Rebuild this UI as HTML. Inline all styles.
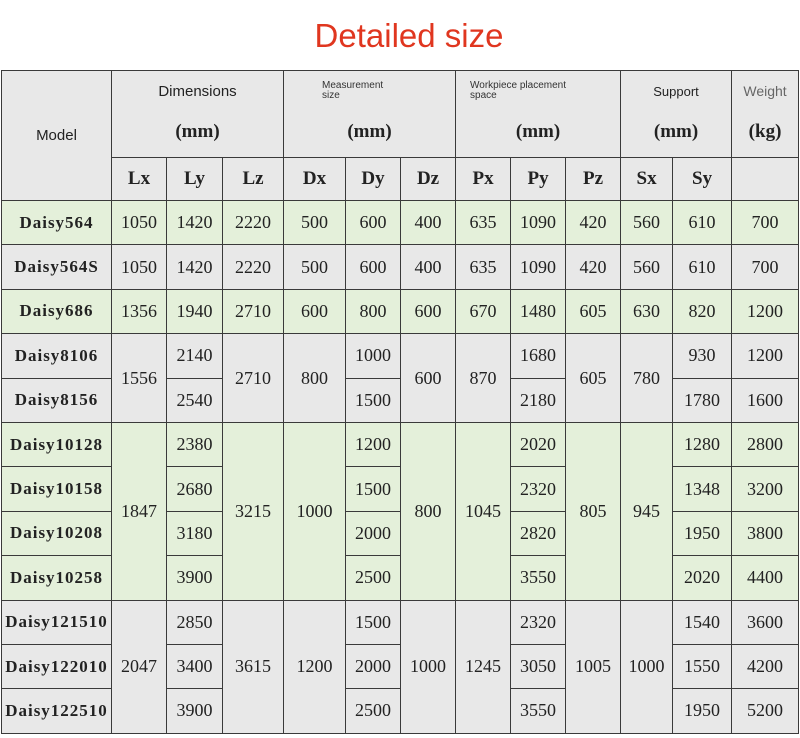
<!DOCTYPE html>
<html><head><meta charset="utf-8"><style>
*{margin:0;padding:0;box-sizing:border-box}
body{width:800px;height:738px;background:#fff;position:relative;overflow:hidden;font-family:"Liberation Serif",serif}
h1{position:absolute;top:17px;left:0;width:818px;text-align:center;font:33px "Liberation Sans",sans-serif;color:#e0361f}
table{position:absolute;left:1px;top:70px;border-collapse:collapse;table-layout:fixed;width:797px}
td{border:1.5px solid #3a3a3a;text-align:center;vertical-align:middle;font-size:18px;color:#222;background:#e8e8e8;padding:0;overflow:hidden;white-space:nowrap}
tr.h1 td{height:87px;position:relative}
tr.h2 td{height:43px;font-weight:bold;font-size:19px}
tr.d td{height:44.4px}
.g td{background:#e4f0da}
td.m{font-weight:bold;font-size:17px;letter-spacing:1px}
.lab{position:absolute;left:0;right:0;top:12px;font:15px "Liberation Sans",sans-serif;color:#222}
.sm{position:absolute;left:14px;top:10px;font:10px/10px "Liberation Sans",sans-serif;color:#333;text-align:left}
.mm{position:absolute;left:0;right:0;top:50px;font-weight:bold;font-size:19px}
</style></head><body>
<h1>Detailed size</h1>
<table>
<colgroup><col style="width:110px"><col style="width:55px"><col style="width:56px"><col style="width:61px"><col style="width:62px"><col style="width:55px"><col style="width:55px"><col style="width:55px"><col style="width:55px"><col style="width:55px"><col style="width:52px"><col style="width:59px"><col style="width:67px"></colgroup>
<tr class="h1"><td rowspan="2" style="font:15px 'Liberation Sans',sans-serif">Model</td>
<td colspan="3"><div class="lab">Dimensions</div><div class="mm">(mm)</div></td>
<td colspan="3"><div class="sm" style="left:38px">Measurement<br>size</div><div class="mm">(mm)</div></td>
<td colspan="3"><div class="sm">Workpiece placement<br>space</div><div class="mm">(mm)</div></td>
<td colspan="2"><div class="lab" style="font-size:13px;top:13px">Support</div><div class="mm">(mm)</div></td>
<td><div class="lab" style="font-size:14px;color:#666">Weight</div><div class="mm">(kg)</div></td></tr>
<tr class="h2"><td>Lx</td><td>Ly</td><td>Lz</td><td>Dx</td><td>Dy</td><td>Dz</td><td>Px</td><td>Py</td><td>Pz</td><td>Sx</td><td>Sy</td><td></td></tr>
<tr class="d g"><td class="m">Daisy564</td><td>1050</td><td>1420</td><td>2220</td><td>500</td><td>600</td><td>400</td><td>635</td><td>1090</td><td>420</td><td>560</td><td>610</td><td>700</td></tr>
<tr class="d"><td class="m">Daisy564S</td><td>1050</td><td>1420</td><td>2220</td><td>500</td><td>600</td><td>400</td><td>635</td><td>1090</td><td>420</td><td>560</td><td>610</td><td>700</td></tr>
<tr class="d g"><td class="m">Daisy686</td><td>1356</td><td>1940</td><td>2710</td><td>600</td><td>800</td><td>600</td><td>670</td><td>1480</td><td>605</td><td>630</td><td>820</td><td>1200</td></tr>
<tr class="d"><td class="m">Daisy8106</td><td rowspan="2">1556</td><td>2140</td><td rowspan="2">2710</td><td rowspan="2">800</td><td>1000</td><td rowspan="2">600</td><td rowspan="2">870</td><td>1680</td><td rowspan="2">605</td><td rowspan="2">780</td><td>930</td><td>1200</td></tr>
<tr class="d"><td class="m">Daisy8156</td><td>2540</td><td>1500</td><td>2180</td><td>1780</td><td>1600</td></tr>
<tr class="d g"><td class="m">Daisy10128</td><td rowspan="4">1847</td><td>2380</td><td rowspan="4">3215</td><td rowspan="4">1000</td><td>1200</td><td rowspan="4">800</td><td rowspan="4">1045</td><td>2020</td><td rowspan="4">805</td><td rowspan="4">945</td><td>1280</td><td>2800</td></tr>
<tr class="d g"><td class="m">Daisy10158</td><td>2680</td><td>1500</td><td>2320</td><td>1348</td><td>3200</td></tr>
<tr class="d g"><td class="m">Daisy10208</td><td>3180</td><td>2000</td><td>2820</td><td>1950</td><td>3800</td></tr>
<tr class="d g"><td class="m">Daisy10258</td><td>3900</td><td>2500</td><td>3550</td><td>2020</td><td>4400</td></tr>
<tr class="d"><td class="m">Daisy121510</td><td rowspan="3">2047</td><td>2850</td><td rowspan="3">3615</td><td rowspan="3">1200</td><td>1500</td><td rowspan="3">1000</td><td rowspan="3">1245</td><td>2320</td><td rowspan="3">1005</td><td rowspan="3">1000</td><td>1540</td><td>3600</td></tr>
<tr class="d"><td class="m">Daisy122010</td><td>3400</td><td>2000</td><td>3050</td><td>1550</td><td>4200</td></tr>
<tr class="d"><td class="m">Daisy122510</td><td>3900</td><td>2500</td><td>3550</td><td>1950</td><td>5200</td></tr>
</table>
</body></html>
